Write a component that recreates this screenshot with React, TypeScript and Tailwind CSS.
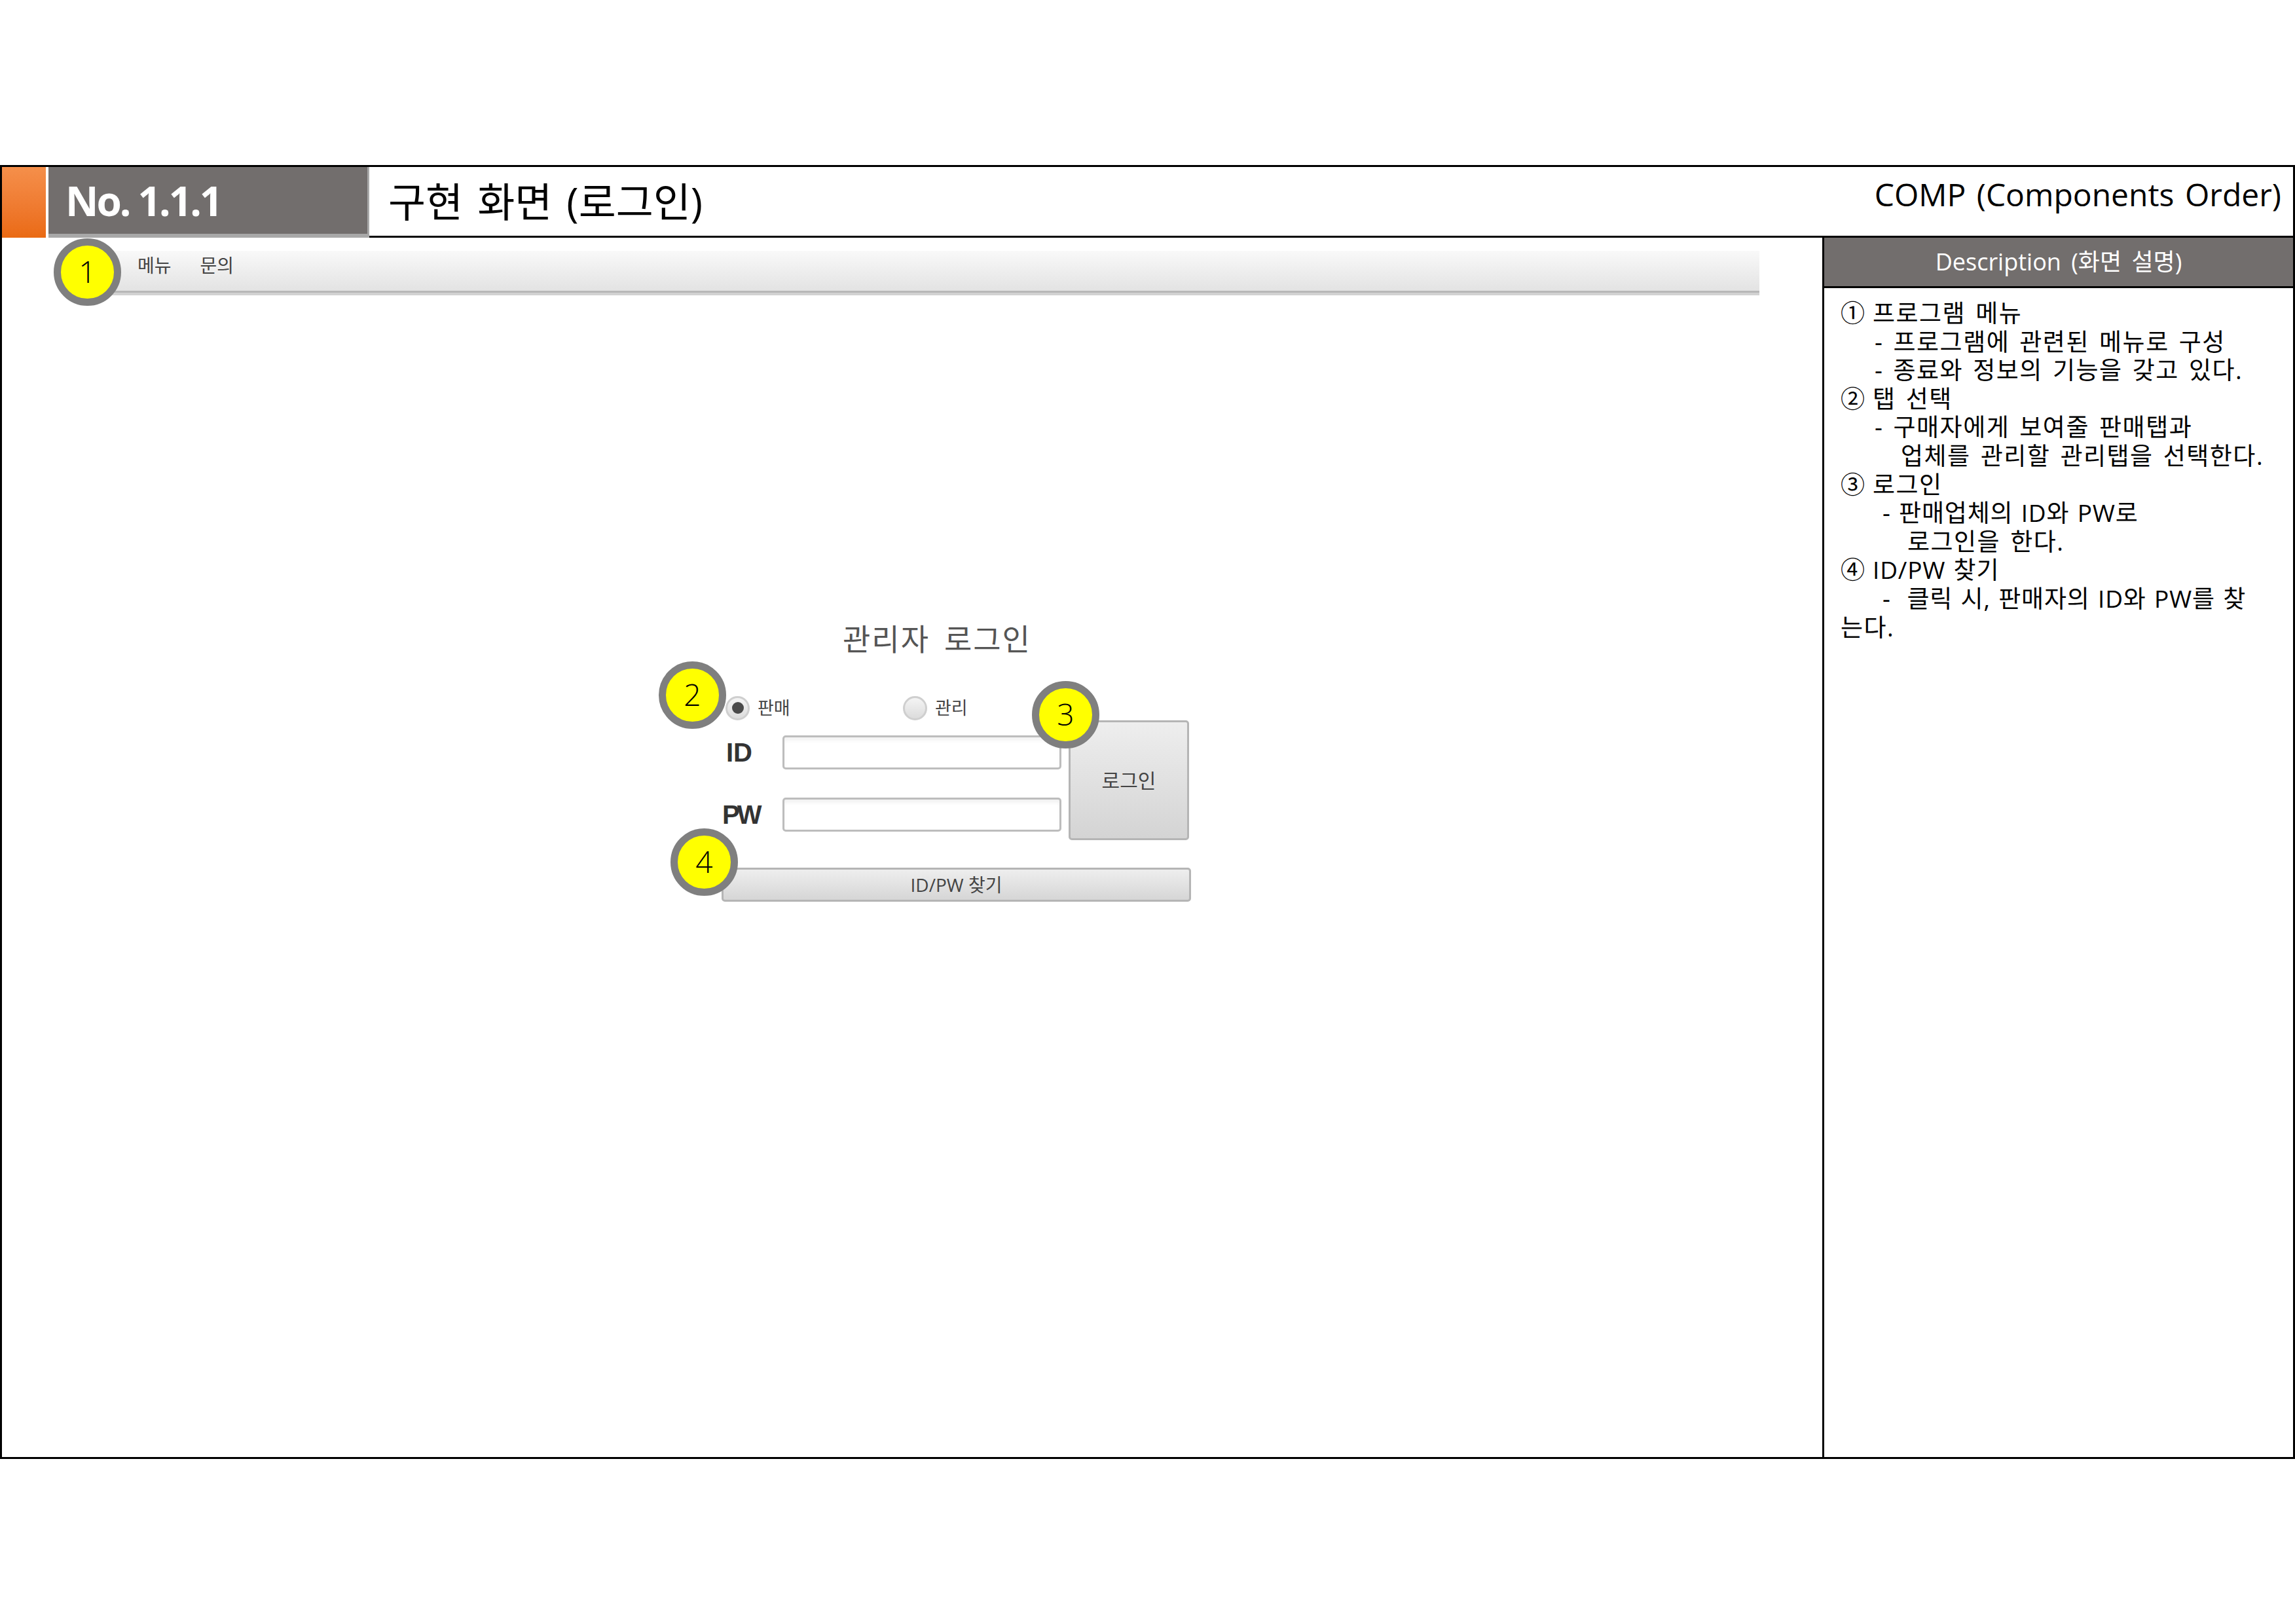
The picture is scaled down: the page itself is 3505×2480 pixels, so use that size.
import React from "react";

const KR = "font-['Open_Sans','Noto_Sans_CJK_KR',sans-serif]";
const UI = "font-['Liberation_Sans','Noto_Sans_CJK_KR',sans-serif]";

// callout number on top of the screen
const Badge = ({ n, className }: { n: number; className: string }) => (
  <div
    className={`absolute flex h-[103px] w-[103px] items-center justify-center rounded-full border-[11px] border-[#7f7f7f] bg-[#ffff00] pb-[3px] text-[46px] font-light text-black ${KR} ${className}`}
  >
    {n}
  </div>
);

const Radio = ({ checked }: { checked?: boolean }) => (
  <span className="flex h-[37px] w-[37px] items-center justify-center rounded-full border-[3px] border-[#cfcfcf] bg-gradient-to-b from-[#f4f4f4] to-[#dcdcdc]">
    {checked && <span className="h-[18px] w-[18px] rounded-full bg-[#4a4a4a]" />}
  </span>
);

// tight lines hold latin text, which runs narrower in the picture
const descriptionLines = [
  { text: "①", mark: true, rest: "프로그램 메뉴", pad: 0 },
  { text: "- 프로그램에 관련된 메뉴로 구성", pad: 52 },
  { text: "- 종료와 정보의 기능을 갖고 있다.", pad: 52 },
  { text: "②", mark: true, rest: "탭 선택", pad: 0 },
  { text: "- 구매자에게 보여줄 판매탭과", pad: 52 },
  { text: "업체를 관리할 관리탭을 선택한다.", pad: 92 },
  { text: "③", mark: true, rest: "로그인", pad: 0 },
  { text: "- 판매업체의 ID와 PW로", pad: 64, tight: true },
  { text: "로그인을 한다.", pad: 102 },
  { text: "④", mark: true, rest: "ID/PW 찾기", pad: 0, tight: true },
  { text: "-  클릭 시, 판매자의 ID와 PW를 찾", pad: 64, tight: true },
  { text: "는다.", pad: 0 },
];

const App = () => {
  return (
    <div className={`relative h-[2480px] w-[3505px] bg-white pt-[252px] text-black ${KR}`}>
      <div className="flex h-[1976px] flex-col border-[3px] border-black">
        {/* title row */}
        <div className="flex h-[108px] shrink-0">
          <div className="w-[67px] bg-gradient-to-b from-[#f58f4a] to-[#ea6a12]" />
          <div className="ml-[4px] flex w-[490px] items-center border-r-[3px] border-b-[6px] border-[#a8a8a8] bg-[#726e6d] pl-[26px] text-[62px] font-bold tracking-[-3px] text-white">
            No. 1.1.1
          </div>
          <div className="flex flex-1 items-center justify-between border-b-[3px] border-black pr-[18px] pl-[29px]">
            <span className="text-[62px] leading-none [word-spacing:6px]">구현 화면 (로그인)</span>
            <span className="mb-[22px] text-[48px] leading-none [word-spacing:4px]">COMP (Components Order)</span>
          </div>
        </div>

        <div className="flex min-h-0 flex-1">
          {/* screen */}
          <div className="w-[2780px] shrink-0">
            <div className="mt-[20px] ml-[167px] flex h-[64px] w-[2517px] items-center border-b-[3px] border-[#b8b8b8] bg-gradient-to-b from-[#f9f9f9] to-[#e3e3e3] pb-[17px] pl-[40px] text-[28px] text-[#444444] shadow-[0_4px_0_#d2d2d2]">
              <span>메뉴</span>
              <span className="ml-[44px]">문의</span>
            </div>

            <div className="mt-[500px] ml-[1096px] w-[725px]">
              <div className="ml-[188px] h-[58px] text-[46px] leading-[56px] tracking-[2px] text-[#555555] [word-spacing:8px]">
                관리자 로그인
              </div>
              <div className="mt-[56px] flex">
                <div className="w-[522px]">
                  <div className="flex h-[40px] items-center pl-[9px] text-[27px] text-[#444444]">
                    <div className="flex w-[271px] items-center gap-[12px]">
                      <Radio checked />
                      <span>판매</span>
                    </div>
                    <div className="flex items-center gap-[12px]">
                      <Radio />
                      <span>관리</span>
                    </div>
                  </div>
                  <div className="mt-[22px] flex h-[52px] items-center">
                    <span className={`w-[96px] pl-[10px] text-[40px] font-bold text-[#333333] ${UI}`}>ID</span>
                    <input className="h-full flex-1 rounded-[5px] border-[3px] border-[#bdbdbd] bg-white shadow-[inset_0_5px_5px_rgba(0,0,0,0.05)]" />
                  </div>
                  <div className="mt-[43px] flex h-[52px] items-center">
                    <span className={`w-[96px] pl-[4px] text-[40px] font-bold tracking-[-4px] text-[#333333] ${UI}`}>PW</span>
                    <input className="h-full flex-1 rounded-[5px] border-[3px] border-[#bdbdbd] bg-white shadow-[inset_0_5px_5px_rgba(0,0,0,0.05)]" />
                  </div>
                </div>
                <button className="mt-[39px] ml-[11px] h-[183px] w-[184px] rounded-[5px] border-[3px] border-[#b5b5b5] bg-gradient-to-b from-[#eeeeee] to-[#d4d4d4] text-[30px] text-[#444444]">
                  로그인
                </button>
              </div>
              <button className="mt-[42px] ml-[3px] h-[52px] w-[717px] rounded-[5px] border-[3px] border-[#b5b5b5] bg-gradient-to-b from-[#eeeeee] to-[#d6d6d6] text-[28px] text-[#444444]">
                ID/PW 찾기
              </button>
            </div>
          </div>

          {/* description */}
          <div className="flex flex-1 flex-col border-l-[3px] border-black">
            <div className="flex h-[77px] shrink-0 items-center justify-center border-b-[3px] border-black bg-[#726e6d] text-[36px] text-white [word-spacing:6px]">
              Description (화면 설명)
            </div>
            <div className="pt-[16px] pl-[25px] text-[37px] leading-[43.6px] tracking-[1.5px] whitespace-pre [word-spacing:4px]">
              {descriptionLines.map((line, i) => (
                <div
                  key={i}
                  className={line.tight ? "flex tracking-[0.8px] [word-spacing:2px]" : "flex"}
                  style={{ paddingLeft: line.pad }}
                >
                  {line.mark ? (
                    <>
                      <span className="w-[49px]">{line.text}</span>
                      <span>{line.rest}</span>
                    </>
                  ) : (
                    line.text
                  )}
                </div>
              ))}
            </div>
          </div>
        </div>
      </div>

      <Badge n={1} className="top-[364px] left-[82px]" />
      <Badge n={2} className="top-[1010px] left-[1006px]" />
      <Badge n={3} className="top-[1040px] left-[1576px]" />
      <Badge n={4} className="top-[1265px] left-[1024px]" />
    </div>
  );
};

export default App;
